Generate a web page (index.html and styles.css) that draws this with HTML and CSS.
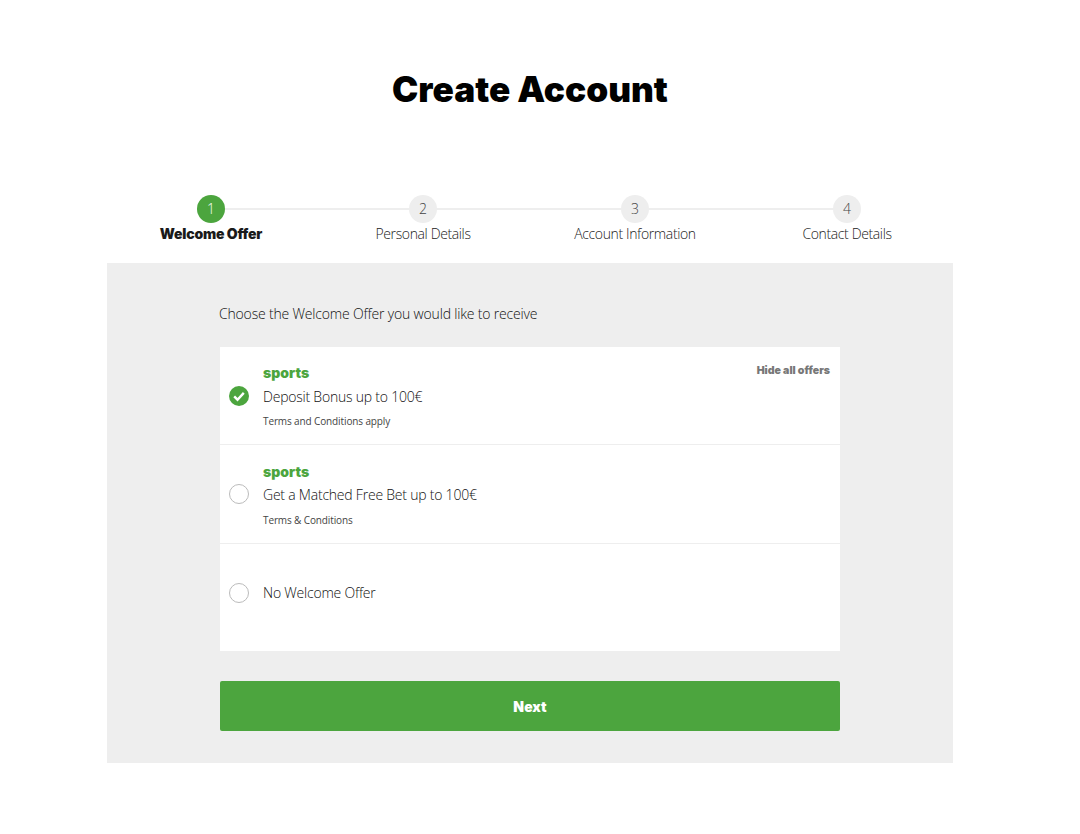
FILE: index.html
```html
<!DOCTYPE html>
<html lang="en">
<head>
    <meta charset="UTF-8">
    <meta name="viewport" content="width=device-width, initial-scale=1.0">
    <title>Create Account</title>
    <link rel="stylesheet" href="styles.css">
</head>
<body>
    <div class="container">
        <h1>Create Account</h1>

        <div class="steps">
            <div class="step active">
                <div class="step-number">1</div>
                <div class="step-label">Welcome Offer</div>
            </div>
            <div class="step">
                <div class="step-number">2</div>
                <div class="step-label">Personal Details</div>
            </div>
            <div class="step">
                <div class="step-number">3</div>
                <div class="step-label">Account Information</div>
            </div>
            <div class="step">
                <div class="step-number">4</div>
                <div class="step-label">Contact Details</div>
            </div>
        </div>

        <div class="panel">
            <p class="intro">Choose the Welcome Offer you would like to receive</p>

            <div class="offers">
                <div class="offer">
                    <div class="radio checked">
                        <svg viewBox="0 0 20 20" width="20" height="20">
                            <circle cx="10" cy="10" r="10" fill="#4ca53e"/>
                            <path d="M5.2 10.4l3.3 3.3 6.3-6.8" fill="none" stroke="#fff" stroke-width="2.4"/>
                        </svg>
                    </div>
                    <div class="offer-text">
                        <div class="offer-type">sports</div>
                        <div class="offer-title">Deposit Bonus up to 100€</div>
                        <div class="offer-terms">Terms and Conditions apply</div>
                    </div>
                    <a class="hide-offers">Hide all offers</a>
                </div>
                <div class="offer">
                    <div class="radio"></div>
                    <div class="offer-text">
                        <div class="offer-type">sports</div>
                        <div class="offer-title">Get a Matched Free Bet up to 100€</div>
                        <div class="offer-terms">Terms &amp; Conditions</div>
                    </div>
                </div>
                <div class="offer no-offer">
                    <div class="radio"></div>
                    <div class="offer-text">
                        <div class="offer-title">No Welcome Offer</div>
                    </div>
                </div>
            </div>

            <button class="next-btn">Next</button>
        </div>
    </div>
</body>
</html>
```

FILE: styles.css
```css
body {
    font-family: "Open Sans", "Liberation Sans", sans-serif;
    margin: 0;
    padding: 0 20px 71px 0;
    background-color: white;
    color: #333;
}
.container {
    width: 846px;
    margin: 0 auto;
}
h1 {
    font-family: Inter, "Liberation Sans", sans-serif;
    font-size: 35.2px;
    font-weight: 900;
    line-height: 44px;
    color: black;
    text-align: center;
    margin: 0;
    padding: 67px 0 84px;
}
.steps {
    display: flex;
    margin: 0 0 0 -2px;
    height: 68px;
}
.step {
    flex: 1;
    display: flex;
    flex-direction: column;
    align-items: center;
    position: relative;
}
.step:not(:last-child)::after {
    content: "";
    position: absolute;
    top: 13px;
    left: 50%;
    width: 100%;
    height: 2px;
    background-color: #eee;
}
.step-number {
    width: 28px;
    height: 28px;
    border-radius: 50%;
    background-color: #eee;
    color: #444;
    font-size: 14px;
    font-weight: 300;
    line-height: 28px;
    text-align: center;
    position: relative;
    z-index: 1;
}
.step-label {
    margin-top: 2px;
    font-size: 14px;
    font-weight: 300;
    line-height: 18px;
    letter-spacing: -0.37px;
    color: #222;
}
.step.active .step-number {
    background-color: #4ca53e;
    color: white;
}
.step.active .step-label {
    font-family: Inter, "Liberation Sans", sans-serif;
    font-weight: 900;
    color: #1a1a1a;
    letter-spacing: -0.22px;
}
.panel {
    background-color: #eee;
    height: 500px;
    box-sizing: border-box;
    padding: 41px 113px 0;
}
.intro {
    margin: 0 0 23px -1px;
    font-size: 14px;
    font-weight: 300;
    line-height: 20px;
    letter-spacing: -0.18px;
    color: #111;
}
.offers {
    background-color: white;
    height: 304px;
}
.offer {
    display: flex;
    align-items: center;
    height: 98px;
    box-sizing: border-box;
    padding-left: 9px;
    border-bottom: 1px solid #eee;
    position: relative;
}
.offer + .offer {
    height: 99px;
}
.offer + .offer .offer-text {
    padding-top: 2px;
}
.offer + .offer .offer-title {
    margin-top: 4px;
}
.offer + .offer .offer-terms {
    margin-top: 8px;
}
.offer.no-offer {
    height: 107px;
    border-bottom: none;
    padding-bottom: 10px;
}
.offer.no-offer .offer-text {
    padding-top: 0;
}
.offer.no-offer .offer-title {
    margin-top: 0;
}
.radio {
    width: 20px;
    height: 20px;
    box-sizing: border-box;
    border: 1px solid #bbb;
    border-radius: 50%;
    background-color: white;
    margin-right: 14px;
}
.radio.checked {
    border: none;
}
.radio svg {
    display: block;
}
.offer-type {
    font-family: Inter, "Liberation Sans", sans-serif;
    font-size: 14px;
    font-weight: 900;
    line-height: 18px;
    color: #4ca53e;
}
.offer-title {
    margin-top: 5px;
    font-size: 14px;
    font-weight: 300;
    line-height: 20px;
    letter-spacing: -0.22px;
    color: #111;
}
.offer-terms {
    margin-top: 7px;
    font-size: 10px;
    font-weight: 400;
    line-height: 14px;
    letter-spacing: -0.12px;
    color: #444;
}
.hide-offers {
    position: absolute;
    top: 17px;
    right: 10px;
    font-family: Inter, "Liberation Sans", sans-serif;
    font-size: 10.6px;
    font-weight: 900;
    line-height: 14px;
    color: #777;
}
.next-btn {
    display: block;
    width: 100%;
    height: 50px;
    margin-top: 30px;
    background-color: #4ca53e;
    color: white;
    border: none;
    border-radius: 2px;
    font-family: Inter, "Liberation Sans", sans-serif;
    font-size: 14px;
    font-weight: 900;
    cursor: pointer;
}
```
